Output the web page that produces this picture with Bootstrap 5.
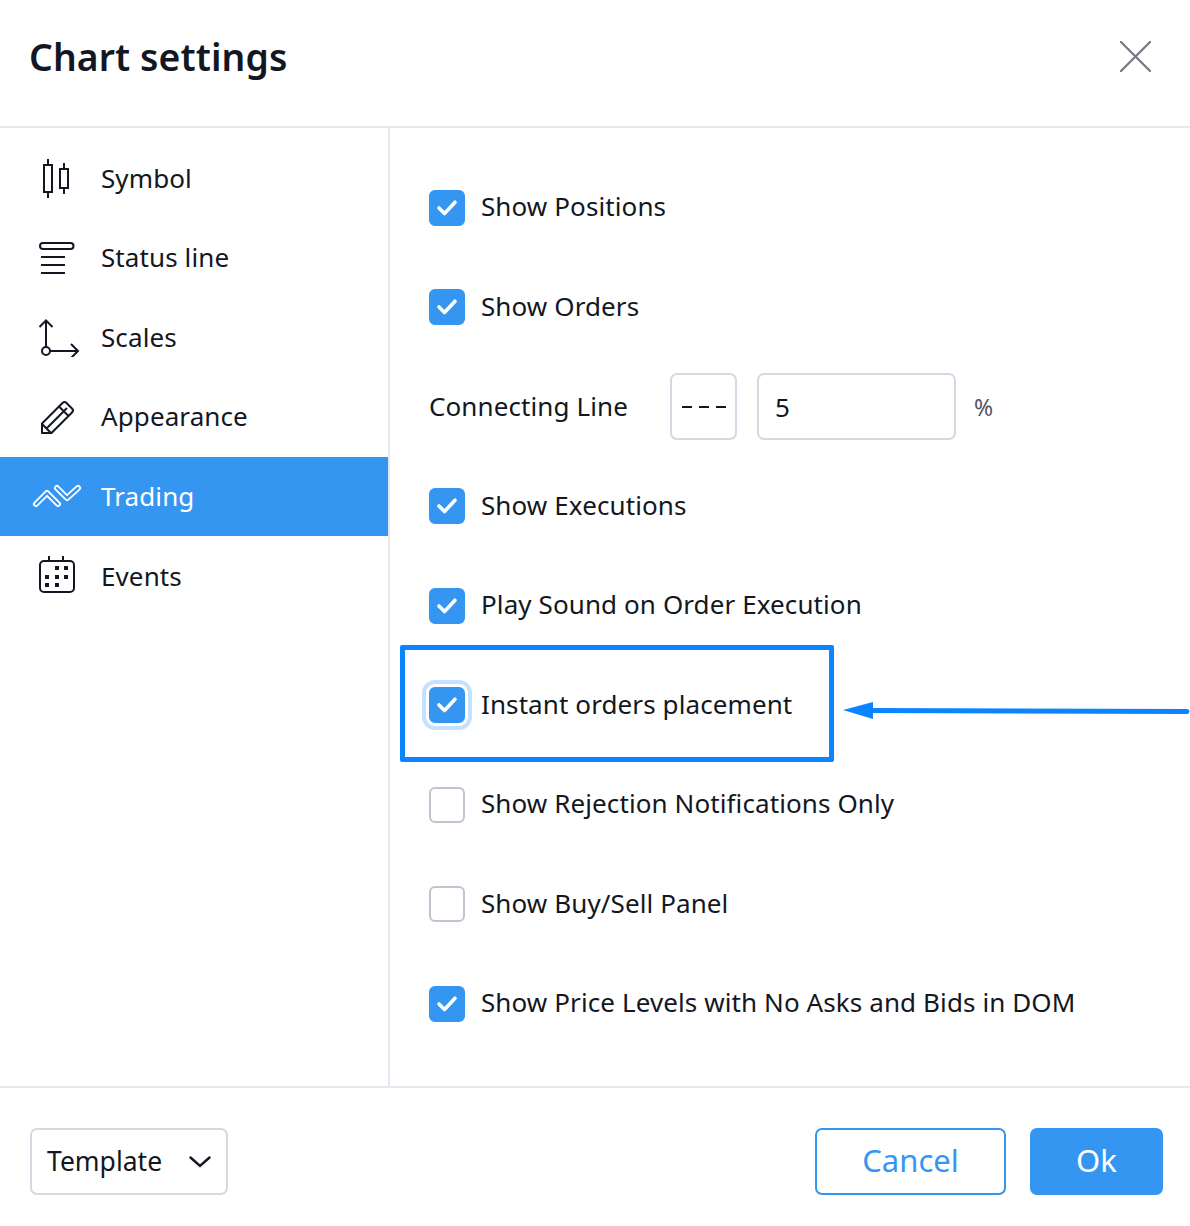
<!DOCTYPE html>
<html lang="en">
<head>
    <meta charset="UTF-8">
    <meta name="viewport" content="width=device-width, initial-scale=1">
    <title>Chart settings</title>
    <link href="https://cdn.jsdelivr.net/npm/bootstrap@5.3.0/dist/css/bootstrap.min.css" rel="stylesheet">
    <style>
        html, body { height: 100%; }
        body {
            background: #fff;
            color: #131722;
            font-family: "Noto Sans", "Open Sans", sans-serif;
            font-size: 26px;
            letter-spacing: .1px;
            overflow: hidden;
        }
        .dlg { position: relative; width: 1190px; height: 1226px; }
        .dlg-head {
            height: 128px;
            padding: 0 39px 13px 29px;
            border-bottom: 2px solid #e6e7ef;
        }
        .dlg-title { font-size: 37.3px; font-weight: 600; margin: 0; line-height: 1; }
        .close-x { background: none; border: 0; padding: 0; line-height: 0; }
        .dlg-body { height: 958px; }
        .side { width: 390px; padding-top: 10.4px; border-right: 2px solid #e6e7ef; }
        .side-item {
            height: 79.6px;
            color: #131722;
            text-decoration: none;
            padding-left: 30px;
        }
        .side-item svg { margin-right: 11px; flex: none; }
        .side-item.on { background: #3596f2; color: #fff; }
        .pane { padding: 30px 0 0 39px; flex: 1; }
        .opt { height: 99.5px; margin: 0; padding: 0; }
        .opt .form-check-input {
            width: 36px;
            height: 36px;
            margin: 0 16px 0 0;
            flex: none;
            float: none;
            border: 2px solid #c1c4d0;
            border-radius: 6px;
            box-shadow: none;
        }
        .opt .form-check-input:checked {
            background-color: #3596f2;
            border-color: #3596f2;
            background-image: url("data:image/svg+xml,%3csvg xmlns='http://www.w3.org/2000/svg' viewBox='0 0 32 32'%3e%3cpath fill='none' stroke='%23fff' stroke-linecap='round' stroke-linejoin='round' stroke-width='3.6' d='M8 16l5.500 5.500L24 10.200'/%3e%3c/svg%3e");
            background-size: 100%;
        }
        .opt .form-check-input.ringed { box-shadow: 0 0 0 3px #fff, 0 0 0 7px #c4e2ff; }
        .opt .form-check-label { white-space: nowrap; margin-bottom: 2px; }
        .line-label { width: 241px; }
        .field {
            height: 67px;
            border: 2px solid #d6d8e3;
            border-radius: 7px;
            font-size: 26px;
            color: #131722;
            box-shadow: none;
        }
        .field-style { width: 67px; margin-right: 20px; }
        .field-num { width: 199px; margin-right: 18px; padding: 0 16px; font-family: inherit; }
        .unit { color: #50535e; font-size: 23px; }
        .dlg-foot {
            height: 140px;
            padding: 40px 27px 0 30px;
            border-top: 2px solid #e6e7ef;
        }
        .tpl-btn {
            width: 198px;
            height: 67px;
            padding: 0 15px;
            border: 2px solid #d6d8e3;
            border-radius: 7px;
            background: #fff;
            color: #131722;
            font-size: 26.5px;
        }
        .act {
            height: 67px;
            border-radius: 7px;
            font-size: 31px;
            padding: 0 0 2px;
        }
        .act-cancel { width: 191px; margin-right: 24px; border: 2px solid #3596f2; color: #3596f2; background: #fff; }
        .act-ok { width: 133px; border: 2px solid #3596f2; background: #3596f2; color: #fff; }
        .mark-box {
            position: absolute;
            left: 400px;
            top: 645px;
            width: 434px;
            height: 117px;
            border: 5px solid #0a84ff;
            border-radius: 2px;
            pointer-events: none;
        }
        .mark-arrow { position: absolute; left: 840px; top: 695px; pointer-events: none; }
    </style>
</head>
<body>
    <div class="dlg">
        <div class="dlg-head d-flex align-items-center justify-content-between">
            <h1 class="dlg-title">Chart settings</h1>
            <button class="close-x" type="button" aria-label="Close">
                <svg width="31" height="31" viewBox="0 0 32 32"><path d="M1 1l30 30M31 1L1 31" fill="none" stroke="#787b86" stroke-width="2.400" stroke-linecap="round"/></svg>
            </button>
        </div>

        <div class="dlg-body d-flex">
            <div class="side">
                <a class="side-item d-flex align-items-center" href="#">
                    <svg width="60" height="40" viewBox="30 158 60 40" fill="none" stroke="#131722" stroke-width="2"><path d="M44 165h8v27h-8zM48 159v6M48 192v6M60 169h8v19h-8zM64 163v6M64 188v6"/></svg>
                    Symbol
                </a>
                <a class="side-item d-flex align-items-center" href="#">
                    <svg width="60" height="40" viewBox="30 238 60 40" fill="none" stroke="#131722" stroke-width="2"><rect x="40" y="243" width="33.500" height="6" rx="3"/><path d="M41 257h24M41 265h24M41 273h24"/></svg>
                    Status line
                </a>
                <a class="side-item d-flex align-items-center" href="#">
                    <svg width="60" height="40" viewBox="30 317 60 40" fill="none" stroke="#131722" stroke-width="2"><circle cx="46" cy="351" r="4"/><path d="M46 347v-27M39.500 327l6.500-6.500 6.500 6.500M50 351h27M71 344l7 7-7 7"/></svg>
                    Scales
                </a>
                <a class="side-item d-flex align-items-center" href="#">
                    <svg width="60" height="40" viewBox="30 397 60 40" fill="none" stroke="#131722" stroke-width="2" stroke-linejoin="round"><path d="M42 433v-9.500L62.500 403q2-2 4 0l5.500 5.500q2 2 0 4L51.500 433zM42 424l9.500 9.500M47 428l20-20M59 406.500l9.500 9.500"/></svg>
                    Appearance
                </a>
                <a class="side-item on d-flex align-items-center" href="#">
                    <svg width="60" height="40" viewBox="30 477 60 40" fill="none" stroke-linecap="round" stroke-linejoin="round"><path d="M36 504l11-11 11 11M57 488l10 10 11-10" stroke="#fff" stroke-width="6"/><path d="M36 504l11-11 11 11M57 488l10 10 11-10" stroke="#3596f2" stroke-width="2.400"/></svg>
                    Trading
                </a>
                <a class="side-item d-flex align-items-center" href="#">
                    <svg width="60" height="40" viewBox="30 556 60 40" fill="none" stroke="#131722" stroke-width="2"><rect x="40" y="561" width="34" height="31" rx="4"/><path d="M49 556v5M63 556v5"/><path fill="#131722" stroke="none" d="M55 566h4v4h-4zM64 566h4v4h-4zM45 575h4v4h-4zM55 575h4v4h-4zM64 575h4v4h-4zM45 583h4v4h-4zM55 583h4v4h-4z"/></svg>
                    Events
                </a>
            </div>

            <div class="pane">
                <div class="form-check opt d-flex align-items-center">
                    <input class="form-check-input" type="checkbox" id="o1" checked>
                    <label class="form-check-label" for="o1">Show Positions</label>
                </div>
                <div class="form-check opt d-flex align-items-center">
                    <input class="form-check-input" type="checkbox" id="o2" checked>
                    <label class="form-check-label" for="o2">Show Orders</label>
                </div>
                <div class="opt d-flex align-items-center">
                    <span class="line-label">Connecting Line</span>
                    <button class="field field-style btn p-0 d-flex align-items-center justify-content-center" type="button" aria-label="Line style">
                        <svg width="44" height="4" viewBox="0 0 44 4"><path d="M0 2h10M17 2h10M34 2h10" stroke="#131722" stroke-width="2"/></svg>
                    </button>
                    <input class="form-control field field-num" type="text" value="5">
                    <span class="unit">%</span>
                </div>
                <div class="form-check opt d-flex align-items-center">
                    <input class="form-check-input" type="checkbox" id="o3" checked>
                    <label class="form-check-label" for="o3">Show Executions</label>
                </div>
                <div class="form-check opt d-flex align-items-center">
                    <input class="form-check-input" type="checkbox" id="o4" checked>
                    <label class="form-check-label" for="o4">Play Sound on Order Execution</label>
                </div>
                <div class="form-check opt d-flex align-items-center">
                    <input class="form-check-input ringed" type="checkbox" id="o5" checked>
                    <label class="form-check-label" for="o5">Instant orders placement</label>
                </div>
                <div class="form-check opt d-flex align-items-center">
                    <input class="form-check-input" type="checkbox" id="o6">
                    <label class="form-check-label" for="o6">Show Rejection Notifications Only</label>
                </div>
                <div class="form-check opt d-flex align-items-center">
                    <input class="form-check-input" type="checkbox" id="o7">
                    <label class="form-check-label" for="o7">Show Buy/Sell Panel</label>
                </div>
                <div class="form-check opt d-flex align-items-center">
                    <input class="form-check-input" type="checkbox" id="o8" checked>
                    <label class="form-check-label" for="o8">Show Price Levels with No Asks and Bids in DOM</label>
                </div>
            </div>
        </div>

        <div class="dlg-foot d-flex align-items-start justify-content-between">
            <button class="tpl-btn d-flex align-items-center justify-content-between" type="button">
                Template
                <svg width="22" height="12" viewBox="0 0 22 12"><path d="M1.500 1.500L11 10l9.500-8.500" fill="none" stroke="#131722" stroke-width="2.400" stroke-linecap="round"/></svg>
            </button>
            <div class="d-flex">
                <button class="btn act act-cancel" type="button">Cancel</button>
                <button class="btn act act-ok" type="button">Ok</button>
            </div>
        </div>

        <div class="mark-box"></div>
        <svg class="mark-arrow" width="350" height="30" viewBox="840 695 350 30">
            <path d="M870 710.500L1187 711.500" fill="none" stroke="#0a84ff" stroke-width="5" stroke-linecap="round"/>
            <path d="M843 710L873 702v17z" fill="#0a84ff"/>
        </svg>
    </div>
    <script src="https://cdn.jsdelivr.net/npm/bootstrap@5.3.0/dist/js/bootstrap.bundle.min.js"></script>
</body>
</html>
